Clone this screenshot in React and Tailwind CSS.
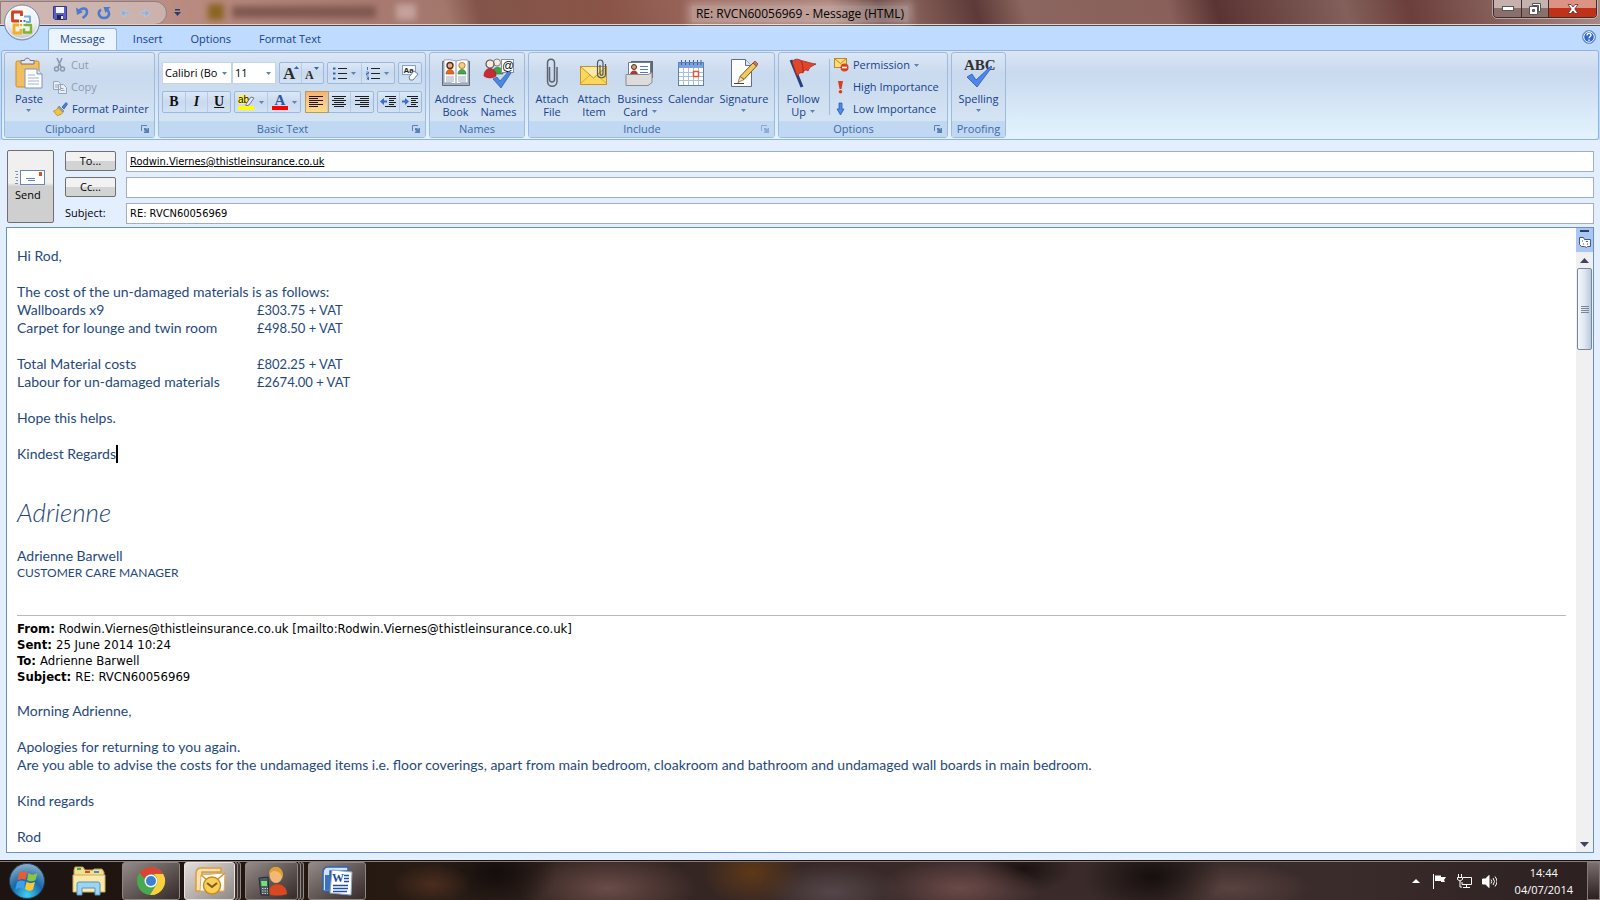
import React, { useState } from "react";

const Caret = ({ className = "" }) => (
    <svg viewBox="0 0 5 3" className={"w-[5px] h-[3px] shrink-0 " + className}>
        <path d="M0 0h5L2.5 3z" fill="#5f83b5" />
    </svg>
);

/* ---------- window chrome icons ---------- */

const OfficeOrb = () => (
    <svg viewBox="0 0 38 40" className="w-[38px] h-10">
        <defs>
            <radialGradient id="orb" cx=".5" cy=".3" r=".75">
                <stop offset="0" stopColor="#ffffff" />
                <stop offset=".6" stopColor="#eceef2" />
                <stop offset="1" stopColor="#a3b0c6" />
            </radialGradient>
        </defs>
        <circle cx="19" cy="19.500" r="17.500" fill="url(#orb)" stroke="#7a8aa5" />
        <circle cx="19" cy="19.500" r="16" fill="none" stroke="#fff" strokeOpacity=".8" />
        <g fill="none" strokeLinejoin="round">
            <path d="M16 18h-6.500v-9h9v4" stroke="#d0421c" strokeWidth="2.800" />
            <path d="M21 13.500h6v5.500h-4" stroke="#6aaee4" strokeWidth="2" />
            <path d="M16 22h-5v8h7v-4" stroke="#f5b020" strokeWidth="2.800" />
            <path d="M22 22h6v7.500h-7v-4" stroke="#7eb52c" strokeWidth="2.400" />
        </g>
        <path d="M17 17h2v2h-2z" fill="#d8431c" />
        <path d="M20.500 17h2v2h-2z" fill="#2f7fc9" />
        <path d="M17 21h2v2h-2z" fill="#f5b020" />
        <path d="M20.500 21h2v2h-2z" fill="#7eb52c" />
    </svg>
);

const SaveIcon = () => (
    <svg viewBox="0 0 14 14" className="w-3.5 h-3.5">
        <path d="M.5.5h13v13H2L.5 12z" fill="#5a5fc4" stroke="#34388c" />
        <path d="M3 1h8v6H3z" fill="#f4f6fd" />
        <path d="M4 9h6v4.500H4z" fill="#23265c" />
        <path d="M8 10h2v3H8z" fill="#dfe4f8" />
    </svg>
);

const UndoIcon = () => (
    <svg viewBox="0 0 14 14" className="w-3.5 h-3.5">
        <path d="M4 5.500c2-4 8-4 8 .5 0 3-2 4.500-4.500 6" fill="none" stroke="#4a7bd0" strokeWidth="2.600" />
        <path d="M1 1.500L2 9l6-3z" fill="#4a7bd0" />
    </svg>
);

const RedoIcon = () => (
    <svg viewBox="0 0 14 14" className="w-3.5 h-3.5">
        <path d="M4 3.500c-4 3-2 8.500 3 8.500s6.500-4.500 3.500-8" fill="none" stroke="#4a7bd0" strokeWidth="2.600" />
        <path d="M6.500 1h7l-5 6z" fill="#4a7bd0" />
    </svg>
);

const NavArrow = ({ flip }) => (
    <svg viewBox="0 0 12 10" className={flip ? "w-3 h-2.5 -scale-x-100" : "w-3 h-2.5"}>
        <path d="M1 5l5-4v3h5v2H6v3z" fill="#8fb0de" stroke="#c3cfe3" strokeWidth=".6" />
    </svg>
);

const Launcher = ({ dim }) => (
    <svg viewBox="0 0 8 8" className={dim ? "w-2 h-2 opacity-50" : "w-2 h-2"}>
        <path d="M.5 6V.5H6" fill="none" stroke="#5b80b4" />
        <path d="M3 3h2l1.500 1.500V3H8v5H3V6.500h1.500L3 5z" fill="#5b80b4" />
    </svg>
);

/* ---------- ribbon icons ---------- */

const PasteIcon = () => (
    <svg viewBox="0 0 28 32" className="w-7 h-8">
        <rect x="1" y="4" width="23" height="26" rx="1.500" fill="#f1bf5e" stroke="#c98d2c" />
        <path d="M6 7V3.500h3.500C9.500.5 15 .5 15 3.500h4V7z" fill="#e5e7ec" stroke="#6f7581" />
        <path d="M10 12h12l5 5v14H10z" fill="#fff" stroke="#7d93b5" />
        <path d="M22 12v5h5" fill="#d8e3f4" stroke="#7d93b5" />
        <path d="M13 18h7M13 21h11M13 24h11M13 27h11" stroke="#9db1cf" />
    </svg>
);

const CutIcon = () => (
    <svg viewBox="0 0 14 14" className="w-3.5 h-3.5" fill="none" stroke="#8c98ab">
        <path d="M4 0l4 9M9 0L5 9" strokeWidth="1.600" />
        <circle cx="3.500" cy="11" r="2" strokeWidth="1.500" />
        <circle cx="9.500" cy="11" r="2" strokeWidth="1.500" />
    </svg>
);

const CopyIcon = () => (
    <svg viewBox="0 0 14 14" className="w-3.5 h-3.5" fill="#e9edf4" stroke="#97a5bb">
        <path d="M.5 1.500h5l2 2v6h-7zM5.500 4.500h5l3 3v6h-8z" />
        <path d="M2 5h3M2 7h3M7.500 8.500h3M7.500 10.500h4" />
    </svg>
);

const PainterIcon = () => (
    <svg viewBox="0 0 15 14" className="w-[15px] h-3.5">
        <path d="M9 5l4-4.500 1.500 1.500L11 7z" fill="#4f7fd0" stroke="#2c529b" strokeWidth=".7" />
        <path d="M6 4l5 5-2 1.500L5 6z" fill="#8fa3c4" stroke="#5b6c8c" strokeWidth=".6" />
        <path d="M5 5.500l5 5c-2 2-4 3-6 3L.5 9C3 8.500 4 7.500 5 5.500z" fill="#f0c544" stroke="#b78a22" strokeWidth=".8" />
    </svg>
);

const FontSizeIcon = ({ shrink }) => (
    <svg viewBox="0 0 16 18" className="w-4 h-[18px] overflow-visible">
        <text x="0" y="15" fontSize={shrink ? 12 : 17} fontFamily="Liberation Serif" fontWeight="bold" fill="#2b2b2b">A</text>
        <path d={shrink ? "M9 3h5l-2.500 3z" : "M11 5h5l-2.500-3z"} fill="#3565ad" />
    </svg>
);

const ListIcon = ({ numbered }) => (
    <svg viewBox="0 0 14 13" className="w-3.5 h-[13px]">
        <path d="M5 1.500h9M5 6.500h9M5 11.500h9" stroke="#222" />
        {numbered ? (
            <path d="M1.500 0v3M.5 5h2v1.500h-2V8h2M.5 10h2v3h-2M1 11.500h1" fill="none" stroke="#3a62ab" strokeWidth=".9" />
        ) : (
            <path d="M0 .5h2.500v2H0zM0 5.500h2.500v2H0zM0 10.500h2.500v2H0z" fill="#3a62ab" />
        )}
    </svg>
);

const ClearIcon = () => (
    <svg viewBox="0 0 17 16" className="w-[17px] h-4 overflow-visible">
        <rect x=".5" y=".5" width="13" height="9" fill="#f6f9fe" stroke="#8ba1c4" />
        <text x="1.500" y="8" fontSize="8" fontFamily="Liberation Sans" fontWeight="bold" fill="#222">Aa</text>
        <path d="M7 12l5-6 4 3-5 6H8z" fill="#fff" stroke="#6c7c9b" />
    </svg>
);

const AlignIcon = ({ d }) => (
    <svg viewBox="0 0 14 12" className="w-3.5 h-3">
        <path d={d} stroke="#1b1b1b" />
    </svg>
);

const IndentIcon = ({ right }) => (
    <svg viewBox="0 0 16 12" className="w-4 h-3">
        <path d="M5 .5h11M9 2.500h7M9 4.500h5M9 6.500h7M9 8.500h5M5 10.500h11" stroke="#1b1b1b" />
        <path d={right ? "M0 4.500h3V2l4 3.500L3 9V6.500H0z" : "M7 4.500H4V2L0 5.500 4 9V6.500h3z"} fill="#3a6ec6" />
    </svg>
);

const HighlightIcon = () => (
    <svg viewBox="0 0 17 15" className="w-[17px] h-[15px] overflow-visible">
        <rect width="10" height="9" fill="#fff35c" />
        <text x="0" y="8" fontSize="10" fontFamily="Liberation Sans" fill="#111">ab</text>
        <path d="M8 9l5-7 3 1-5 7-3 1z" fill="#e6ebf5" stroke="#55627d" strokeWidth=".8" />
        <rect y="11" width="16" height="4" fill="#ffff00" />
    </svg>
);

const FontColorIcon = () => (
    <svg viewBox="0 0 16 15" className="w-4 h-[15px] overflow-visible">
        <text x="2.500" y="10" fontSize="15" fontFamily="Liberation Serif" fontWeight="bold" fill="#2e559c">A</text>
        <rect y="11" width="16" height="4" fill="#fe0000" />
    </svg>
);

const AddressBookIcon = () => (
    <svg viewBox="0 0 30 30" className="w-[30px] h-[30px]">
        <path d="M1.500 3.500h27v24h-27z" fill="#a9b1bf" stroke="#606b7f" />
        <path d="M3 2q6-1 12 1 6-2 12-1v23q-6-1-12 1-6-2-12-1z" fill="#fff" stroke="#8290a8" strokeWidth=".8" />
        <path d="M15 3v23" stroke="#8592a8" />
        <circle cx="9" cy="7.500" r="3" fill="#e8b088" stroke="#5c2e16" strokeWidth="1.400" />
        <path d="M5 16c0-6 8-6 8 0z" fill="#e8671c" stroke="#9c3f10" strokeWidth=".6" />
        <circle cx="21" cy="7.500" r="3" fill="#f2cf8a" stroke="#c89540" strokeWidth="1.200" />
        <path d="M17 16c0-6 8-6 8 0z" fill="#43a845" stroke="#23742a" strokeWidth=".6" />
        <path d="M5 19h8M5 21h8M5 23h8M17 19h8M17 21h8M17 23h8" stroke="#9eabc0" />
    </svg>
);

const CheckNamesIcon = () => (
    <svg viewBox="0 0 30 30" className="w-[30px] h-[30px] overflow-visible">
        <circle cx="13" cy="4.500" r="3.500" fill="#f1ebe6" stroke="#8a8078" />
        <path d="M8 16c0-9 11-9 11 0z" fill="#3fa048" stroke="#266f2d" strokeWidth=".6" />
        <circle cx="6" cy="6" r="4" fill="#f1ebe6" stroke="#6b4a44" strokeWidth="1.200" />
        <path d="M0 18c0-10 12-10 12 0-3 2.500-9 2.500-12 0z" fill="#c92a35" stroke="#8a1720" strokeWidth=".6" />
        <rect x="17.500" y="1.500" width="12" height="13" fill="#fff" stroke="#8592a8" />
        <text x="18" y="12" fontSize="12" fontFamily="Liberation Sans" fill="#111">@</text>
        <path d="M9 21l4-2 3 4 9-10 2 2-10 15z" fill="#4c86e0" stroke="#2a58a8" strokeWidth=".7" />
    </svg>
);

const ClipIcon = () => (
    <svg viewBox="0 0 12 30" className="w-3 h-[30px]" fill="none">
        <path d="M3.500 9v12c0 4 5 4 5 0V5c0-5-7-5-7 0v18c0 7 9.500 7 9.500 0V9" stroke="#5e6570" strokeWidth="1.500" />
    </svg>
);

const AttachItemIcon = () => (
    <svg viewBox="0 0 30 28" className="w-[30px] h-7">
        <rect x="1.500" y="7.500" width="26" height="18" fill="#fbd75b" stroke="#c39425" />
        <path d="M2 24l9-8M27 24l-9-8" stroke="#d9aa36" />
        <path d="M2 8l12.500 11L27 8" fill="#fdeaa0" stroke="#c39425" />
        <path d="M21 6v8c0 3 3 3 3 0V4c0-4-5.500-4-5.500 0v11c0 5 8 5 8 0V5" fill="none" stroke="#4f5663" strokeWidth="1.200" />
    </svg>
);

const CardIcon = () => (
    <svg viewBox="0 0 30 28" className="w-[30px] h-7">
        <path d="M6 2h22v17H6z" fill="#5d6676" />
        <path d="M3.500 3.500h22v16h-22z" fill="#fff" stroke="#6e7c94" />
        <circle cx="9" cy="8" r="2.500" fill="#d99a72" stroke="#51301d" />
        <path d="M5 16c0-6 8-6 8 0z" fill="#a83a32" />
        <path d="M15 7.500h8M15 10.500h8M15 13.500h8" stroke="#4f7cc0" />
        <path d="M1 15.500h22l4-2v10l-4 3H1z" fill="#dcdcdc" stroke="#8b8b8b" />
    </svg>
);

const CalendarIcon = () => (
    <svg viewBox="0 0 28 28" className="w-7 h-7">
        <rect x="1.500" y="3.500" width="25" height="23" fill="#fff" stroke="#5c7fb8" />
        <rect x="2" y="4" width="24" height="5" fill="#7ba2dc" />
        <path d="M4.500 1v5M8.500 1v5M12.500 1v5M16.500 1v5M20.500 1v5M24 1v5" stroke="#3a5c98" strokeDasharray="2 1" />
        <path d="M2 13.500h24M2 17.500h24M2 21.500h24M6.500 9v17M11.500 9v17M16.500 9v17M21.500 9v17" stroke="#a8bfdf" />
        <rect x="16.500" y="12.500" width="5" height="5" fill="#fff" stroke="#e4572e" strokeWidth="1.500" />
    </svg>
);

const SignatureIcon = () => (
    <svg viewBox="0 0 28 30" className="w-7 h-[30px]">
        <path d="M1.500 1.500h14l6 6v21h-20z" fill="#fdfdfe" stroke="#5f6f8d" />
        <path d="M15.500 1.500v6h6" fill="#dde6f4" stroke="#5f6f8d" />
        <path d="M23 5l3.500 3L14 21.500l-4-3z" fill="#f3c95c" stroke="#7b5a1c" />
        <path d="M23 5l2-2 3 3-1.500 2z" fill="#d9775e" stroke="#7b3a2c" strokeWidth=".7" />
        <path d="M10 18.500l4 3-6 3z" fill="#f5e2bd" stroke="#6b5533" strokeWidth=".7" />
        <path d="M4 25.500h10" stroke="#444" />
    </svg>
);

const FlagIcon = () => (
    <svg viewBox="0 0 28 30" className="w-7 h-[30px]">
        <path d="M2 2l11 27" stroke="#27407c" strokeWidth="3" />
        <path d="M3 4c4-5 7-2 11-1 5 1 6 2 13 3-4 2-7 3-8 7-2-2-4-1-5 2-2-1-4 0-6 3z" fill="#e0462b" stroke="#9c2413" strokeWidth=".8" />
        <path d="M12 3c2 4 2 7 2 11" fill="none" stroke="#a62a17" />
    </svg>
);

const PermissionIcon = () => (
    <svg viewBox="0 0 15 14" className="w-[15px] h-3.5">
        <rect x=".5" y=".5" width="12" height="9" fill="#fbdc78" stroke="#b98b28" />
        <path d="M1 1l5.500 4.500L12 1" fill="none" stroke="#b98b28" />
        <circle cx="10.500" cy="9.500" r="4" fill="#d8431c" />
        <path d="M8 9.500h5" stroke="#fff" strokeWidth="1.600" />
    </svg>
);

const HighIcon = () => (
    <svg viewBox="0 0 15 14" className="w-[15px] h-3.5">
        <path d="M4 1h5L7.500 9h-2z" fill="#dd3b1e" />
        <circle cx="6.500" cy="11.800" r="1.800" fill="#dd3b1e" />
    </svg>
);

const LowIcon = () => (
    <svg viewBox="0 0 15 14" className="w-[15px] h-3.5">
        <path d="M5 1h3v6h2l-3.500 6L3 7h2z" fill="#4f8be6" stroke="#2a5db3" strokeWidth=".8" />
    </svg>
);

const SpellingIcon = () => (
    <svg viewBox="0 0 32 30" className="w-8 h-[30px] overflow-visible">
        <text x="1" y="12" fontSize="15" fontFamily="Liberation Serif" fontWeight="bold" fill="#333">ABC</text>
        <path d="M4 19l5-3 4 6L28 8l1 1-15 20z" fill="#4f86ea" stroke="#2c59b5" strokeWidth=".8" />
    </svg>
);

/* ---------- ribbon pieces ---------- */

const Group = ({ label, launcher, dim, className = "", children }) => (
    <section className="flex flex-col shrink-0 rounded-[3px] border border-[#9ebbdf] bg-linear-to-b from-[#dce7f4] from-0% via-[#c9d9ee] via-25% to-[#d8e8f5]">
        <div className={"flex flex-1 " + className}>{children}</div>
        <div className="flex h-4 items-center bg-[#c0d8f1] text-[#3d68aa]">
            <span className="flex-1 text-center">{label}</span>
            {launcher && (
                <button aria-label={label + " options"} className="pl-1.5 pr-[5px]">
                    <Launcher dim={dim} />
                </button>
            )}
        </div>
    </section>
);

const BigButton = ({ icon, lines, caret, caretBelow, className = "" }) => (
    <button className={"flex shrink-0 flex-col items-center pt-[3px] text-[#15428b] " + className}>
        <span className="flex h-[34px] items-center">{icon}</span>
        <span className="mt-0.5 flex flex-col items-center whitespace-nowrap leading-[13px]">
            {lines.map((line, i) => (
                <span key={line} className="flex items-center gap-1">
                    {line}
                    {caret && i === lines.length - 1 && <Caret />}
                </span>
            ))}
            {caretBelow && <Caret className="mt-1" />}
        </span>
    </button>
);

const SmallButton = ({ icon, label, caret, disabled }) => (
    <button
        disabled={disabled}
        className={"flex h-[22px] items-center gap-1 whitespace-nowrap " + (disabled ? "text-[#8d9bb0]" : "text-[#15428b]")}
    >
        {icon}
        <span>{label}</span>
        {caret && <Caret />}
    </button>
);

const ToolSet = ({ className = "", children }) => (
    <div className={"flex h-[22px] rounded-[2px] border border-[#9bb8dd] bg-linear-to-b from-[#dce8f6] via-[#c9daef] to-[#d3e2f3] divide-x divide-[#b4cae6] " + className}>
        {children}
    </div>
);

const Tool = ({ label, active, caret, children }) => (
    <button
        aria-label={label}
        className={"flex flex-1 items-center justify-center gap-1 " + (active ? "bg-linear-to-b from-[#fbb26c] to-[#fddc8b] outline outline-[#b49a6c]" : "")}
    >
        {children}
        {caret && <Caret />}
    </button>
);

const FontSelect = ({ label, value, className }) => (
    <label className={"relative flex items-center bg-white border border-[#c3d5ec] " + className}>
        <select aria-label={label} defaultValue={value} className="h-full w-full appearance-none pl-0.5 text-[11px] text-black outline-none">
            <option>{value}</option>
        </select>
        <Caret className="absolute right-1" />
    </label>
);

const Ribbon = () => (
    <div className="flex gap-[3px] rounded-[3px] border border-[#8db2e3] bg-linear-to-b from-[#dbe6f4] from-0% via-[#c9d9ee] via-25% to-[#e3f4ff] p-px pl-0.5 h-[90px] mx-px">
        <Group label="Clipboard" launcher className="w-[149px]">
            <BigButton icon={<PasteIcon />} lines={["Paste"]} caretBelow className="w-12" />
            <div className="flex flex-col pt-px">
                <SmallButton icon={<CutIcon />} label="Cut" disabled />
                <SmallButton icon={<CopyIcon />} label="Copy" disabled />
                <SmallButton icon={<PainterIcon />} label="Format Painter" />
            </div>
        </Group>

        <Group label="Basic Text" launcher className="w-[266px] flex-col gap-[7px] px-[3px] pt-[9px]">
            <div className="flex justify-between">
                <div className="flex h-[22px]">
                    <FontSelect label="Font" value="Calibri (Bo" className="w-[70px]" />
                    <FontSelect label="Font size" value="11" className="w-11" />
                </div>
                <ToolSet className="w-[45px]">
                    <Tool label="Grow font"><FontSizeIcon /></Tool>
                    <Tool label="Shrink font"><FontSizeIcon shrink /></Tool>
                </ToolSet>
                <ToolSet className="w-[68px]">
                    <Tool label="Bullets" caret><ListIcon /></Tool>
                    <Tool label="Numbering" caret><ListIcon numbered /></Tool>
                </ToolSet>
                <ToolSet className="w-6">
                    <Tool label="Clear formatting"><ClearIcon /></Tool>
                </ToolSet>
            </div>
            <div className="flex justify-between">
                <ToolSet className="w-[69px] font-['Liberation_Serif',serif] text-sm font-bold text-[#111]">
                    <Tool label="Bold">B</Tool>
                    <Tool label="Italic"><i>I</i></Tool>
                    <Tool label="Underline"><u>U</u></Tool>
                </ToolSet>
                <ToolSet className="w-[67px]">
                    <Tool label="Highlight" caret><HighlightIcon /></Tool>
                    <Tool label="Font color" caret><FontColorIcon /></Tool>
                </ToolSet>
                <ToolSet className="w-[69px]">
                    <Tool label="Align left" active><AlignIcon d="M0 .5h14M0 2.500h9M0 4.500h14M0 6.500h9M0 8.500h14M0 10.500h9" /></Tool>
                    <Tool label="Center"><AlignIcon d="M0 .5h14M2 2.500h10M0 4.500h14M2 6.500h10M0 8.500h14M2 10.500h10" /></Tool>
                    <Tool label="Align right"><AlignIcon d="M0 .5h14M5 2.500h9M0 4.500h14M5 6.500h9M0 8.500h14M5 10.500h9" /></Tool>
                </ToolSet>
                <ToolSet className="w-[45px]">
                    <Tool label="Decrease indent"><IndentIcon /></Tool>
                    <Tool label="Increase indent"><IndentIcon right /></Tool>
                </ToolSet>
            </div>
        </Group>

        <Group label="Names" className="w-[94px] px-1">
            <BigButton icon={<AddressBookIcon />} lines={["Address", "Book"]} className="w-[43px]" />
            <BigButton icon={<CheckNamesIcon />} lines={["Check", "Names"]} className="w-[43px]" />
        </Group>

        <Group label="Include" launcher dim className="w-[245px] px-0.5">
            <BigButton icon={<ClipIcon />} lines={["Attach", "File"]} className="w-[42px]" />
            <BigButton icon={<AttachItemIcon />} lines={["Attach", "Item"]} className="w-[42px]" />
            <BigButton icon={<CardIcon />} lines={["Business", "Card"]} caret className="w-[50px]" />
            <BigButton icon={<CalendarIcon />} lines={["Calendar"]} className="w-[52px]" />
            <BigButton icon={<SignatureIcon />} lines={["Signature"]} caretBelow className="w-[54px]" />
        </Group>

        <Group label="Options" launcher className="w-[168px]">
            <BigButton icon={<FlagIcon />} lines={["Follow", "Up"]} caret className="w-12" />
            <div className="my-1.5 ml-0.5 mr-1 w-px bg-[#9ebbdf]" />
            <div className="flex flex-col pt-px">
                <SmallButton icon={<PermissionIcon />} label="Permission" caret />
                <SmallButton icon={<HighIcon />} label="High Importance" />
                <SmallButton icon={<LowIcon />} label="Low Importance" />
            </div>
        </Group>

        <Group label="Proofing" className="w-[53px] justify-center">
            <BigButton icon={<SpellingIcon />} lines={["Spelling"]} caretBelow />
        </Group>
    </div>
);

/* ---------- title bar ---------- */

const TitleBar = () => (
    <header className="relative flex h-[26px] shrink-0 items-center border-b border-[#4a4a50] bg-[linear-gradient(75deg,#c3a49c_0%,#b98b80_12%,#a87a70_24%,#a3776c_28%,#83554a_30%,#8a5448_38%,#9a675c_44%,#a3786e_52%,#643f3b_55%,#86605a_57%,#5c3a37_61%,#8b655f_64%,#89605a_73%,#5a3432_76%,#83605b_84%,#6b3f3b_88%,#8a645e_94%,#a58c87_100%)]">
        <div className="absolute inset-x-0 bottom-0 h-px bg-[#e3d3cf]" />
        <div className="absolute left-[208px] top-1 flex items-center gap-2 blur-[3px]">
            <span className="h-4 w-4 bg-[#8a6420]" />
            <span className="h-3 w-36 bg-[#80584f]" />
            <span className="ml-3 h-4 w-5 bg-[#c4a29b]" />
        </div>
        <div className="flex h-6 w-[167px] items-center gap-2 rounded-r-full border border-[#8c7f83] bg-[#d3c0bd]/70 pl-[52px]">
            <button aria-label="Save"><SaveIcon /></button>
            <button aria-label="Undo"><UndoIcon /></button>
            <button aria-label="Repeat"><RedoIcon /></button>
            <button aria-label="Previous item"><NavArrow /></button>
            <button aria-label="Next item"><NavArrow flip /></button>
        </div>
        <button aria-label="Customize Quick Access Toolbar" className="ml-[7px]">
            <svg viewBox="0 0 7 7" className="w-[7px] h-[7px]">
                <path d="M1 0h5v1.500H1zM0 3h7L3.500 7z" fill="#2b3d6b" />
            </svg>
        </button>
        <h1 className="absolute left-1/2 top-1.5 -translate-x-1/2 bg-white/30 px-1 text-xs leading-4 text-black shadow-[0_0_8px_4px_rgba(255,255,255,0.3)]">
            RE: RVCN60056969 - Message (HTML)
        </h1>
        <div className="absolute right-[3px] top-0 flex h-[18px] divide-x divide-[#3c2c2c] overflow-hidden rounded-b-[4px] border border-t-0 border-[#3c2c2c] outline outline-white/40">
            <button aria-label="Minimize" className="flex w-7 items-center justify-center bg-linear-to-b from-[#c5b1ae] from-50% to-[#8a706d] to-50%">
                <svg viewBox="0 0 12 5" className="w-3 h-[5px]"><rect x=".5" y=".5" width="11" height="4" fill="#fff" stroke="#555" /></svg>
            </button>
            <button aria-label="Restore" className="flex w-[27px] items-center justify-center bg-linear-to-b from-[#c5b1ae] from-50% to-[#8a706d] to-50%">
                <svg viewBox="0 0 12 12" className="w-3 h-3">
                    <path d="M3.500.5h8v8h-2v-6h-6z" fill="#fff" stroke="#555" />
                    <path fillRule="evenodd" d="M.5 3.500h8v8h-8zM3.500 6.500v2h2v-2z" fill="#fff" stroke="#555" />
                </svg>
            </button>
            <button aria-label="Close" className="flex w-[47px] items-center justify-center bg-linear-to-b from-[#dd9384] from-50% to-[#c0311a] to-50%">
                <svg viewBox="0 0 12 10" className="w-3 h-2.5">
                    <path d="M1 .5h3l2 2.500L8 .5h3L7.800 5 11 9.500H8L6 7 4 9.500H1L4.200 5z" fill="#fff" stroke="#5b2c28" strokeWidth=".8" />
                </svg>
            </button>
        </div>
        <button aria-label="Office Button" className="absolute left-[3px] top-[3px] z-10">
            <OfficeOrb />
        </button>
    </header>
);

const Tabs = () => {
    const [tab, setTab] = useState("Message");

    return (
        <nav className="flex h-6 shrink-0 items-end bg-[#bfdbff] pl-12 pr-1 text-[#15428b]">
            {["Message", "Insert", "Options", "Format Text"].map((name) => (
                <button
                    key={name}
                    onClick={() => setTab(name)}
                    className={"h-[22px] px-[11px] rounded-t-[3px] border border-b-0 mr-1 " + (tab === name ? "border-[#8db2e3] bg-[#ebf3fd]" : "border-transparent")}
                >
                    {name}
                </button>
            ))}
            <button aria-label="Help" className="ml-auto mb-1.5">
                <svg viewBox="0 0 14 14" className="w-3.5 h-3.5">
                    <circle cx="7" cy="7" r="6.500" fill="#2f66d0" stroke="#6f93c8" />
                    <circle cx="7" cy="7" r="5.300" fill="none" stroke="#fff" />
                    <path d="M5 5.500c0-3 4-2.500 4-.3C9 6.500 7 6.500 7 8.300M7 9.500V11" fill="none" stroke="#fff" strokeWidth="1.400" />
                </svg>
            </button>
        </nav>
    );
};

/* ---------- message header ---------- */

const headerButton = "h-5 w-[51px] rounded-[2px] border border-[#707070] bg-linear-to-b from-[#f2f2f2] from-50% to-[#d3d3d3] to-50%";
const headerInput = "h-[21px] w-full border border-[#a3aebd] bg-white px-[3px] text-[11px] outline-none font-['DejaVu_Sans_Condensed','DejaVu_Sans',sans-serif]";

const Envelope = () => (
    <header className="flex shrink-0 gap-[11px] pl-[7px] pr-1.5 pt-2.5 text-black">
        <button className="flex h-[73px] w-[47px] shrink-0 flex-col items-start justify-center rounded-[2px] border border-[#707070] bg-linear-to-b from-[#f0f0f0] from-45% to-[#cfcfcf] to-50% pl-[7px]">
            <svg viewBox="0 0 30 15" className="mb-0.5 w-[30px] h-[15px]">
                <path d="M0 1.500h3M1 4.500h2M0 7.500h3M1 10.500h2M0 13.500h3" stroke="#7f93b6" />
                <rect x="5.500" y=".5" width="24" height="14" fill="#fff" stroke="#6d87b5" />
                <path d="M24 2h3v4h-3z" fill="#d4502e" />
                <path d="M11 8.500h9M13 10.500h7" stroke="#5f86c0" />
            </svg>
            <span>Send</span>
        </button>
        <div className="grid flex-1 grid-cols-[51px_1fr] items-start gap-x-2.5 gap-y-[5px] pt-px">
            <button className={headerButton}>To...</button>
            <input aria-label="To" defaultValue="Rodwin.Viernes@thistleinsurance.co.uk" className={headerInput + " underline"} />
            <button className={headerButton}>Cc...</button>
            <input aria-label="Cc" className={headerInput} />
            <label htmlFor="subject" className="self-center">Subject:</label>
            <input id="subject" defaultValue="RE: RVCN60056969" className={headerInput} />
        </div>
    </header>
);

/* ---------- message body ---------- */

const costs = [
    ["Wallboards x9", "£303.75 + VAT"],
    ["Carpet for lounge and twin room", "£498.50 + VAT"],
    null,
    ["Total Material costs", "£802.25 + VAT"],
    ["Labour for un-damaged materials", "£2674.00 + VAT"],
];

const quoted = [
    ["From:", "Rodwin.Viernes@thistleinsurance.co.uk [mailto:Rodwin.Viernes@thistleinsurance.co.uk]"],
    ["Sent:", "25 June 2014 10:24"],
    ["To:", "Adrienne Barwell"],
    ["Subject:", "RE: RVCN60056969"],
];

const MessageText = () => (
    <article className="min-w-0 flex-1 overflow-hidden pl-2.5 pr-2.5 pt-[19px] font-['Lato',sans-serif] text-sm leading-[18px] text-[#1f497d]">
        <p>Hi Rod,</p>
        <p className="mt-[18px]">The cost of the un-damaged materials is as follows:</p>
        <table>
            <tbody>
                {costs.map((row, i) =>
                    row ? (
                        <tr key={i}>
                            <td className="w-60 p-0">{row[0]}</td>
                            <td className="p-0 text-[13px]">{row[1]}</td>
                        </tr>
                    ) : (
                        <tr key={i} className="h-[18px]" />
                    )
                )}
            </tbody>
        </table>
        <p className="mt-[18px]">Hope this helps.</p>
        <p className="mt-[18px] flex">
            Kindest Regards
            <span className="h-[18px] w-0.5 bg-black" />
        </p>
        <p className="mt-8 h-[52px] text-[26px] font-light italic leading-[34px]">Adrienne</p>
        <p>Adrienne Barwell</p>
        <p className="text-xs leading-4">CUSTOMER CARE MANAGER</p>
        <hr className="mt-[34px] border-[#b5b9c0]" />
        <dl className="mt-[5px] mb-[17px] font-['DejaVu_Sans_Condensed','DejaVu_Sans',sans-serif] text-[13px] leading-4 text-black">
            {quoted.map(([name, value]) => (
                <div key={name} className="flex gap-1">
                    <dt className="font-bold">{name}</dt>
                    <dd>{value}</dd>
                </div>
            ))}
        </dl>
        <p>Morning Adrienne,</p>
        <p className="mt-[18px]">Apologies for returning to you again.</p>
        <p>
            Are you able to advise the costs for the undamaged items i.e. floor coverings, apart from main bedroom, cloakroom and
            bathroom and undamaged wall boards in main bedroom.
        </p>
        <p className="mt-[18px]">Kind regards</p>
        <p className="mt-[18px]">Rod</p>
    </article>
);

const ScrollBar = () => (
    <div className="flex w-[17px] shrink-0 flex-col items-center bg-[#f0f0f0]">
        <button aria-label="Select browse object" className="flex h-6 w-full flex-col items-center gap-1 bg-[#a9c7f2] pt-0.5">
            <span className="h-0.5 w-[9px] bg-[#2b3d6b]" />
            <svg viewBox="0 0 12 12" className="w-3 h-3">
                <path d="M.5 1.500h4l1 2h6v7h-3l-1 1-2-1h-3l-2-2z" fill="#fff" stroke="#49557a" />
                <path d="M3 5h1M7 5.500h2M4 8h1M8 8h1" stroke="#49557a" />
            </svg>
        </button>
        <button aria-label="Scroll up" className="flex h-4 items-center">
            <svg viewBox="0 0 9 5" className="w-[9px] h-[5px]"><path d="M0 5h9L4.500 0z" fill="#3b4466" /></svg>
        </button>
        <div className="flex h-[82px] w-[15px] flex-col items-center justify-center gap-px rounded-[2px] border border-[#77859e] bg-linear-to-r from-[#f4f7fa] via-[#dfe7f0] to-[#b9cadd]">
            <span className="h-px w-2 bg-[#77859e]" />
            <span className="h-px w-2 bg-[#77859e]" />
            <span className="h-px w-2 bg-[#77859e]" />
            <span className="h-px w-2 bg-[#77859e]" />
        </div>
        <button aria-label="Scroll down" className="mt-auto flex h-4 items-center">
            <svg viewBox="0 0 9 5" className="w-[9px] h-[5px]"><path d="M0 0h9L4.500 5z" fill="#3b4466" /></svg>
        </button>
    </div>
);

/* ---------- taskbar ---------- */

const StartOrb = () => (
    <svg viewBox="0 0 38 38" className="w-[38px] h-[38px]">
        <defs>
            <radialGradient id="start" cx=".5" cy=".9" r=".9">
                <stop offset="0" stopColor="#3fd0f7" />
                <stop offset=".5" stopColor="#1768a8" />
                <stop offset="1" stopColor="#8fb2cc" />
            </radialGradient>
        </defs>
        <circle cx="19" cy="19" r="17.500" fill="url(#start)" stroke="#243c52" />
        <path d="M11 11c3-2 6-2 8-.5l-1.500 7.500c-2-1.500-5-1.500-8 .5z" fill="#f0592a" />
        <path d="M20.500 11c3 2 5 2 9 0l-2 7c-3 2-6 1.500-8.500 0z" fill="#8cc63e" />
        <path d="M9 20c3-2 5-2 8-.5L15.500 27c-3-2-5-1.500-8 .5z" fill="#3f9fe8" />
        <path d="M18.500 20c3 1.500 5 1.500 8.500 0l-2 7.500c-3 2-5 1.500-8-.500z" fill="#fdc72f" />
    </svg>
);

const ExplorerIcon = () => (
    <svg viewBox="0 0 34 30" className="w-[34px] h-[30px]">
        <path d="M2 4l1-3h8l2 3h8l1-1h8l2 3v19H2z" fill="#f4de8f" stroke="#b89b4c" />
        <path d="M5 2h4v2H5z" fill="#3aa856" />
        <path d="M13 5h5v2h-5z" fill="#d64b33" />
        <path d="M22 5h5v2h-5z" fill="#3c8fd0" />
        <path d="M1 9h32v17H1z" fill="#fae9a8" stroke="#c9ae62" />
        <path d="M5 29V18q0-2 2-2h19q2 0 2 2v11h-5v-7H10v7z" fill="#9fd3ef" stroke="#4d97c7" />
    </svg>
);

const ChromeIcon = () => (
    <svg viewBox="0 0 30 30" className="w-[30px] h-[30px]">
        <circle cx="15" cy="15" r="14" fill="#4aa850" />
        <path d="M15 1a14 14 0 0 1 12.120 7H15a7 7 0 0 0-6.500 4.500L3.500 7A14 14 0 0 1 15 1z" fill="#dd4335" />
        <path d="M27.120 8A14 14 0 0 1 14 29l6.500-10.500A7 7 0 0 0 19 9.300L18 8z" fill="#fcd03a" />
        <circle cx="15" cy="15" r="6.500" fill="#f3f3f3" />
        <circle cx="15" cy="15" r="5" fill="#3f7fd2" />
    </svg>
);

const OutlookIcon = () => (
    <svg viewBox="0 0 32 30" className="w-8 h-[30px]">
        <path d="M7 2h20v4H8v19H2V8c0-4 2-6 5-6z" fill="#fbe2b0" stroke="#e09a34" strokeWidth="1.500" />
        <path d="M7 9l24-2-1 18H6z" fill="#fff" stroke="#e3a95a" />
        <path d="M7 9l11 9L31 7" fill="none" stroke="#d98f2a" strokeWidth="1.500" />
        <circle cx="18" cy="19.500" r="8.500" fill="#f8cf58" stroke="#c98a1c" strokeWidth="1.500" />
        <path d="M13 17l5 4 5-4" fill="none" stroke="#7d5a16" strokeWidth="2" />
    </svg>
);

const PhoneUserIcon = () => (
    <svg viewBox="0 0 32 30" className="w-8 h-[30px]">
        <path d="M12 28c0-13 19-13 19 0-5 2-14 2-19 0z" fill="#d9481e" />
        <ellipse cx="20" cy="9" rx="6.500" ry="8" fill="#f4b777" />
        <path d="M13 8c0-10 14-9 14 1l-1 4c0-6-4-8-9-8z" fill="#e0a02c" />
        <path d="M3 12l9-1 1 18H5z" fill="#4d5a63" stroke="#222b33" />
        <path d="M5 15h6v5H5.500z" fill="#6fe07a" />
        <path d="M6 22.500h6M6 25h6M6 27.500h6" stroke="#c3ccd2" strokeDasharray="1.500 1" />
    </svg>
);

const WordIcon = () => (
    <svg viewBox="0 0 32 30" className="w-8 h-[30px] overflow-visible">
        <path d="M7 1h20v4H9v20H2V7c0-4 2-6 5-6z" fill="#cfe0f7" stroke="#2f62ae" strokeWidth="1.500" />
        <path d="M4 9h5v15H4z" fill="#3c71bf" />
        <path d="M11 4l20 2-1 23-21-2z" fill="#fff" stroke="#8aa6d2" />
        <text x="11" y="16" fontSize="12" fontFamily="Liberation Serif" fontWeight="bold" fill="#1f4f9f">W</text>
        <path d="M23 9.500h5M23 12.500h5M23 15.500h5M12 19.500h15M12 22.500h15M12 25.500h14" stroke="#1f4f9f" strokeWidth="1.500" />
    </svg>
);

const TaskButton = ({ label, active, stacked, className, children }) => (
    <div className="flex">
        <button
            aria-label={label}
            className={
                "flex items-center justify-center rounded-[3px] border " +
                (active ? "border-[#e8e4e2] bg-linear-to-br from-[#e4dfdc] to-[#8f8885] " : "border-[#8f8683] bg-linear-to-br from-[#958b88] to-[#352b29] ") +
                className
            }
        >
            {children}
        </button>
        {stacked && <span className="w-[3px] rounded-r-[3px] border border-l-0 border-[#8f8683] bg-[#3a302e]" />}
        {stacked && <span className="w-[3px] rounded-r-[3px] border border-l-0 border-[#8f8683] bg-[#3a302e]" />}
    </div>
);

/* desktop wallpaper showing through the glass */
const wallpaper =
    "bg-[radial-gradient(ellipse_40px_20px_at_27%_60%,#4a2c1e,transparent),radial-gradient(ellipse_60px_40px_at_31%_30%,#140d0b,transparent),radial-gradient(ellipse_90px_36px_at_38%_70%,#6a4c49,transparent),radial-gradient(ellipse_50px_34px_at_47%_30%,#5e3818,transparent),radial-gradient(ellipse_70px_30px_at_52%_80%,#55464a,transparent),radial-gradient(ellipse_80px_30px_at_60%_70%,#6b4a49,transparent),radial-gradient(ellipse_50px_24px_at_64%_20%,#1c1211,transparent),radial-gradient(ellipse_70px_40px_at_72%_40%,#160f0d,transparent),radial-gradient(ellipse_80px_26px_at_77%_70%,#5a4340,transparent),linear-gradient(90deg,#1d1311_0%,#24180f_22%,#38272280_35%,#3a2b2a_60%,#3a2c2b_84%,#2c2020_100%)]";

const TaskBar = () => (
    <footer className={"flex h-10 shrink-0 border-t border-[#17110f] bg-[#2b1f1c] " + wallpaper}>
        <div className="flex flex-1 items-stretch border-t border-[#8a7f7c]">
            <button aria-label="Start" className="ml-2 w-[38px]"><StartOrb /></button>
            <button aria-label="Windows Explorer" className="mx-[26px] flex items-center"><ExplorerIcon /></button>
            <div className="-ml-2.5 flex gap-1">
                <TaskButton label="Google Chrome" className="w-[58px]"><ChromeIcon /></TaskButton>
                <TaskButton label="Outlook" active stacked className="w-[51px]"><OutlookIcon /></TaskButton>
                <TaskButton label="Remote Support" stacked className="w-[53px]"><PhoneUserIcon /></TaskButton>
                <TaskButton label="Word" className="w-[58px]"><WordIcon /></TaskButton>
            </div>
            <div className="ml-auto flex items-center gap-2.5 text-white">
                <button aria-label="Show hidden icons" className="mr-0.5">
                    <svg viewBox="0 0 8 4" className="w-2 h-1"><path d="M0 4h8L4 0z" fill="#fff" /></svg>
                </button>
                <button aria-label="Action Center">
                    <svg viewBox="0 0 15 15" className="w-[15px] h-[15px]"><path d="M1.500 0v15" stroke="#fff" /><path d="M3 1.500h6v1.500h5l-2 3 1 2H9V7H3z" fill="#fff" /></svg>
                </button>
                <button aria-label="Network">
                    <svg viewBox="0 0 15 15" className="w-[15px] h-[15px]" fill="none" stroke="#fff">
                        <path d="M6 3.500h8.500v7H5V8M9.500 11v2.500M6 13.500h7M1.500 0v3M4.500 0v3M.5 3.500h5v2L3 7 .5 5.500zM3 7v6h2" />
                    </svg>
                </button>
                <button aria-label="Volume">
                    <svg viewBox="0 0 15 15" className="w-[15px] h-[15px]" fill="none" stroke="#fff">
                        <path d="M.5 5h3L7 1.500v12L3.500 10h-3z" fill="#fff" />
                        <path d="M9 5.500q1.500 2 0 4M11 4q3 3.500 0 7M13 2.500q4 5 0 10" />
                    </svg>
                </button>
                <time className="ml-2 mr-1 text-center leading-[17px]">
                    14:44
                    <br />
                    04/07/2014
                </time>
                <button aria-label="Show desktop" className="h-full w-[13px] border border-[#857a78] bg-linear-to-b from-[#7a6f6d] to-[#2b2120]" />
            </div>
        </div>
    </footer>
);

export default function App() {
    return (
        <div className="flex h-screen flex-col overflow-hidden bg-[#e3eeff] font-['Open_Sans',sans-serif] text-[11px]">
            <TitleBar />
            <Tabs />
            <div className="shrink-0 bg-[#bfdbff]">
                <Ribbon />
            </div>
            <Envelope />
            <main className="mx-1.5 mb-[7px] mt-[3px] flex min-h-0 flex-1 border border-[#6592c6] bg-white">
                <MessageText />
                <ScrollBar />
            </main>
            <TaskBar />
        </div>
    );
}
